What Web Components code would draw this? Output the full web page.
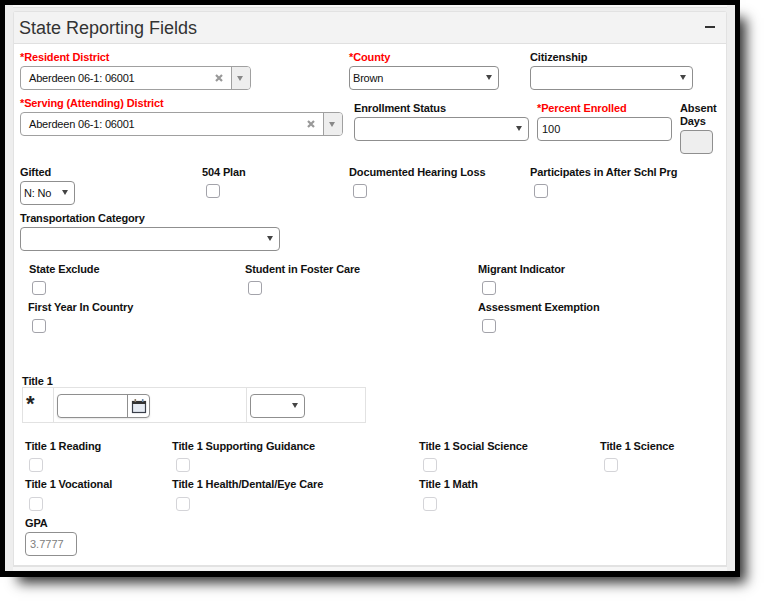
<!DOCTYPE html>
<html>
<head>
<meta charset="utf-8">
<style>
  html, body { margin: 0; background: #fff; }
  body { width: 765px; height: 601px; overflow: hidden; font-family: "Liberation Sans", Arial, sans-serif; }
  .row { display: grid; }
</style>
</head>
<body>
<template id="tpl-panel">
  <style>
    :host { display: block; width: 730px; height: 566px; background: #eee; border: solid #000; border-width: 5px 5px 6px 5px; box-shadow: 12px 12px 12px -6px rgba(0,0,0,.8); }
    .top { height: 2px; background: #f8f8f8; border-bottom: 1px solid #e2e2e2; margin: 0 8px; }
    .box { margin: 3px 8px 0 8px; height: 556px; background: #fff; border: 1px solid #e2e2e2; border-bottom-width: 2px; border-radius: 3px 3px 0 0; box-sizing: border-box; }
    .foot { height: 4px; margin: 0 8px; background: #f6f6f6; }
    header { height: 32px; background: #f3f3f3; border-bottom: 1px solid #e0e0e0; display: flex; align-items: center; justify-content: space-between; padding: 0 6px 0 5px; box-sizing: border-box; }
    h2 { margin: 0; padding-top: 1px; font: 400 18px "Liberation Sans", Arial, sans-serif; color: #333; }
    .min { width: 10px; height: 2px; background: #333; margin: 0 5px 2px 0; }
    .body { padding: 0 0 0 6px; }
  </style>
  <div class="top"></div>
  <div class="box">
    <header><h2><slot name="title"></slot></h2><div class="min"></div></header>
    <div class="body"><slot></slot></div>
  </div>
  <div class="foot"></div>
</template>

<template id="tpl-label">
  <style>
    :host { display: block; font: 700 11px/13px "Liberation Sans", Arial, sans-serif; letter-spacing: -.13px; color: #111; white-space: nowrap; }
    :host([req]) { color: #f00; }
  </style>
  <slot></slot>
</template>

<template id="tpl-select">
  <style>
    :host { display: block; box-sizing: border-box; height: 24px; background: #fff; border: 1px solid #8f8f8f; border-radius: 4px; position: relative; font: 400 11px/22px "Liberation Sans", Arial, sans-serif; letter-spacing: -.2px; color: #111; padding-left: 3px; white-space: nowrap; }
    .a { position: absolute; right: 6px; top: 8px; width: 0; height: 0; border: solid transparent; border-width: 5px 3.5px 0; border-top-color: #444; }
  </style>
  <slot></slot><span class="a"></span>
</template>

<template id="tpl-combo">
  <style>
    :host { display: flex; box-sizing: border-box; height: 24px; background: #fff; border: 1px solid #a0a0a0; border-radius: 4px; font: 400 11px/22px "Liberation Sans", Arial, sans-serif; letter-spacing: -.2px; color: #111; overflow: hidden; }
    .v { flex: 1; padding-left: 8px; }
    .x { width: 24px; display: flex; align-items: center; justify-content: center; }
    .b { width: 18px; background: #eee; border-left: 1px solid #a0a0a0; position: relative; }
    .b::after { content: ""; position: absolute; left: 5px; top: 9px; border: solid transparent; border-width: 5px 3.5px 0; border-top-color: #888; }
  </style>
  <span class="v"><slot></slot></span>
  <span class="x"><svg width="8" height="8" viewBox="0 0 8 8"><path d="M1 1L7 7M7 1L1 7" stroke="#999" stroke-width="2.2" fill="none"/></svg></span>
  <span class="b"></span>
</template>

<template id="tpl-input">
  <style>
    :host { display: block; box-sizing: border-box; height: 24px; background: #fff; border: 1px solid #8f8f8f; border-radius: 4px; font: 400 11px/22px "Liberation Sans", Arial, sans-serif; color: #111; padding-left: 4px; }
    :host([off]) { background: #eee; }
    :host([muted]) { color: #808080; }
  </style>
  <slot></slot>
</template>

<template id="tpl-check">
  <style>
    :host { display: block; width: 14px; height: 14px; box-sizing: border-box; background: #fff; border: 1px solid #a3a3aa; border-radius: 3px; }
    :host([off]) { border-color: #d4d4d8; }
  </style>
</template>

<template id="tpl-date">
  <style>
    :host { display: flex; box-sizing: border-box; width: 93px; height: 24px; background: #fff; border: 1px solid #8f8f8f; border-radius: 4px; box-shadow: 0 1px 2px rgba(0,0,0,.1); }
    .v { width: 69px; border-right: 1px solid #8f8f8f; }
    .c { flex: 1; display: flex; align-items: center; justify-content: center; }
  </style>
  <span class="v"></span>
  <span class="c">
    <svg width="16" height="16" viewBox="0 0 16 16">
      <rect x="1.5" y="3.5" width="13" height="11" fill="#e6ebf3" stroke="#3a3f4a" stroke-width="1.2"/>
      <rect x="1" y="3" width="14" height="3" fill="#333"/>
      <rect x="3.5" y="1" width="1.6" height="3" fill="#8a7a66"/>
      <rect x="10.9" y="1" width="1.6" height="3" fill="#6a88a8"/>
    </svg>
  </span>
</template>

<script>
// every field element is just a template clone, no behaviour in this mockup
function register(tag, tplId) {
  customElements.define(tag, class extends HTMLElement {
    constructor() {
      super();
      this.attachShadow({ mode: 'open' }).appendChild(document.getElementById(tplId).content.cloneNode(true));
    }
  });
}
register('rf-panel', 'tpl-panel');
register('rf-label', 'tpl-label');
register('rf-select', 'tpl-select');
register('rf-combo', 'tpl-combo');
register('rf-input', 'tpl-input');
register('rf-check', 'tpl-check');
register('rf-date', 'tpl-date');
</script>

<rf-panel>
  <span slot="title">State Reporting Fields</span>

  <div class="row" style="grid-template-columns:329px 181px 163px;padding-top:7px">
    <div><rf-label req>*Resident District</rf-label><rf-combo style="width:231px;margin-top:2px">Aberdeen 06-1: 06001</rf-combo></div>
    <div><rf-label req>*County</rf-label><rf-select style="width:150px;margin-top:2px">Brown</rf-select></div>
    <div><rf-label>Citizenship</rf-label><rf-select style="margin-top:2px"></rf-select></div>
  </div>

  <div class="row" style="grid-template-columns:334px 183px 143px 40px;padding-top:7px;height:64px">
    <div><rf-label req>*Serving (Attending) District</rf-label><rf-combo style="width:323px;margin-top:2px">Aberdeen 06-1: 06001</rf-combo></div>
    <div style="padding-top:5px"><rf-label>Enrollment Status</rf-label><rf-select style="width:175px;margin-top:2px"></rf-select></div>
    <div style="padding-top:5px"><rf-label req>*Percent Enrolled</rf-label><rf-input style="width:135px;margin-top:2px">100</rf-input></div>
    <div style="padding-top:5px"><rf-label>Absent<br>Days</rf-label><rf-input off style="width:33px;margin-top:2px"></rf-input></div>
  </div>

  <div class="row" style="grid-template-columns:182px 147px 181px 1fr;padding-top:5px">
    <div><rf-label>Gifted</rf-label><rf-select style="width:55px;margin-top:2px">N: No</rf-select></div>
    <div><rf-label>504 Plan</rf-label><rf-check style="margin:5px 0 0 4px"></rf-check></div>
    <div><rf-label>Documented Hearing Loss</rf-label><rf-check style="margin:5px 0 0 4px"></rf-check></div>
    <div><rf-label>Participates in After Schl Prg</rf-label><rf-check style="margin:5px 0 0 4px"></rf-check></div>
  </div>

  <div style="padding-top:7px"><rf-label>Transportation Category</rf-label><rf-select style="width:260px;margin-top:2px"></rf-select></div>

  <div class="row" style="grid-template-columns:216px 233px 1fr;padding:12px 0 0 9px">
    <div><rf-label>State Exclude</rf-label><rf-check style="margin:5px 0 0 3px"></rf-check></div>
    <div><rf-label>Student in Foster Care</rf-label><rf-check style="margin:5px 0 0 3px"></rf-check></div>
    <div><rf-label>Migrant Indicator</rf-label><rf-check style="margin:5px 0 0 4px"></rf-check></div>
  </div>
  <div class="row" style="grid-template-columns:450px 1fr;padding:6px 0 0 8px">
    <div><rf-label>First Year In Country</rf-label><rf-check style="margin:5px 0 0 4px"></rf-check></div>
    <div><rf-label>Assessment Exemption</rf-label><rf-check style="margin:5px 0 0 4px"></rf-check></div>
  </div>

  <div style="padding:42px 0 0 2px">
    <rf-label>Title 1</rf-label>
    <div class="row" style="grid-template-columns:31px 193px 118px;width:344px;height:36px;margin-top:-1px;box-sizing:border-box;border:1px solid #e2e2e2">
      <div style="font:700 22px/32px 'Liberation Sans',Arial,sans-serif;color:#222;padding-left:3px;border-right:1px solid #e2e2e2">*</div>
      <div style="padding:6px 0 0 3px;border-right:1px solid #e2e2e2"><rf-date></rf-date></div>
      <div style="padding:6px 0 0 3px"><rf-select style="width:55px"></rf-select></div>
    </div>
  </div>

  <div class="row" style="grid-template-columns:147px 247px 181px 1fr;padding:17px 0 0 5px">
    <div><rf-label>Title 1 Reading</rf-label><rf-check off style="margin:5px 0 0 4px"></rf-check></div>
    <div><rf-label>Title 1 Supporting Guidance</rf-label><rf-check off style="margin:5px 0 0 4px"></rf-check></div>
    <div><rf-label>Title 1 Social Science</rf-label><rf-check off style="margin:5px 0 0 4px"></rf-check></div>
    <div><rf-label>Title 1 Science</rf-label><rf-check off style="margin:5px 0 0 4px"></rf-check></div>
  </div>
  <div class="row" style="grid-template-columns:147px 247px 1fr;padding:6px 0 0 5px">
    <div><rf-label>Title 1 Vocational</rf-label><rf-check off style="margin:6px 0 0 4px"></rf-check></div>
    <div><rf-label>Title 1 Health/Dental/Eye Care</rf-label><rf-check off style="margin:6px 0 0 4px"></rf-check></div>
    <div><rf-label>Title 1 Math</rf-label><rf-check off style="margin:6px 0 0 4px"></rf-check></div>
  </div>
  <div style="padding:6px 0 0 5px"><rf-label>GPA</rf-label><rf-input muted style="width:52px;margin-top:2px">3.7777</rf-input></div>
</rf-panel>
</body>
</html>
